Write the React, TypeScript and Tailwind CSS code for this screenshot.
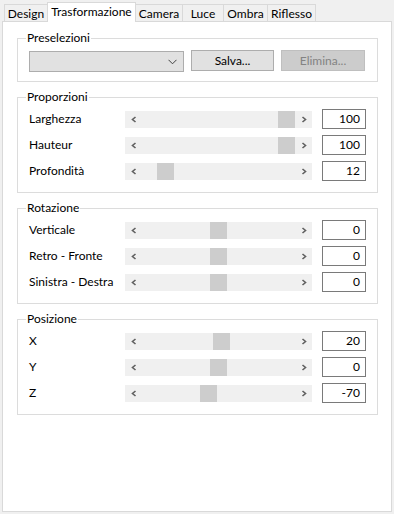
import React from 'react';

type SliderRow = { label: string; value: string; thumb: number };

const tabs = [
  { name: 'Design', w: 'w-[44px]' },
  { name: 'Trasformazione', w: 'w-[89px]', active: true },
  { name: 'Camera', w: 'w-[48px]' },
  { name: 'Luce', w: 'w-[42px]' },
  { name: 'Ombra', w: 'w-[45px]' },
  { name: 'Riflesso', w: 'w-[49px]' },
];

const groups: { title: string; rows: SliderRow[] }[] = [
  {
    title: 'Proporzioni',
    rows: [
      { label: 'Larghezza', value: '100', thumb: 136 },
      { label: 'Hauteur', value: '100', thumb: 136 },
      { label: 'Profondità', value: '12', thumb: 15 },
    ],
  },
  {
    title: 'Rotazione',
    rows: [
      { label: 'Verticale', value: '0', thumb: 68 },
      { label: 'Retro - Fronte', value: '0', thumb: 68 },
      { label: 'Sinistra - Destra', value: '0', thumb: 68 },
    ],
  },
  {
    title: 'Posizione',
    rows: [
      { label: 'X', value: '20', thumb: 71 },
      { label: 'Y', value: '0', thumb: 68 },
      { label: 'Z', value: '-70', thumb: 58 },
    ],
  },
];

const Chevron = ({ dir }: { dir: 'left' | 'right' }) => (
  <svg width="6" height="7" viewBox="0 0 6 7" className="shrink-0">
    <path
      d={dir === 'left' ? 'M4.5 1 L1.5 3.5 L4.5 6' : 'M1.5 1 L4.5 3.5 L1.5 6'}
      fill="none"
      stroke="#606060"
      strokeWidth="1.6"
    />
  </svg>
);

const ScrollBar = ({ thumb }: { thumb: number }) => (
  <div className="flex h-[17px] w-[187px] items-stretch bg-[#f0f0f0]">
    <div className="flex w-[17px] items-center justify-center">
      <Chevron dir="left" />
    </div>
    <div className="flex flex-1 items-stretch">
      <div className="w-[17px] bg-[#cdcdcd]" style={{ marginLeft: thumb }} />
    </div>
    <div className="flex w-[17px] items-center justify-center">
      <Chevron dir="right" />
    </div>
  </div>
);

const Group: React.FC<{ title: string; className?: string; children: React.ReactNode }> = ({
  title,
  className,
  children,
}) => (
  <fieldset className={`border border-[#dcdcdc] ${className ?? ''}`}>
    <legend className="ml-[8px] px-[1px] text-[12px] leading-[14px] text-[#000]">{title}</legend>
    <div className="px-[11px]">{children}</div>
  </fieldset>
);

export default function App() {
  return (
    <div
      className="flex h-[514px] w-[394px] flex-col bg-[#f0f0f0] px-[2px] pb-[2px] pt-[1px] text-[12px] text-black"
      style={{ fontFamily: 'Lato, "Liberation Sans", sans-serif' }}
    >
      <div className="relative z-10 flex h-[20px] items-end pl-[2px]">
        {tabs.map((t) =>
          t.active ? (
            <div
              key={t.name}
              className={`${t.w} -mb-px -ml-px flex h-[20px] items-start justify-center border border-b-0 border-[#d9d9d9] bg-white pt-[1px] leading-[15px]`}
            >
              {t.name}
            </div>
          ) : (
            <div
              key={t.name}
              className={`${t.w} -ml-px flex h-[17px] items-center justify-center border border-b-0 border-[#d9d9d9] bg-[#f0f0f0] leading-[15px] first:ml-0`}
            >
              {t.name}
            </div>
          )
        )}
      </div>

      <div className="flex-1 border border-[#d9d9d9] bg-white pl-[14px] pr-[13px] pt-[9px]">
        <Group title="Preselezioni">
          <div className="flex items-start pb-[9px] pt-[5px]">
            <div className="mt-px flex h-[21px] w-[155px] items-center justify-end border border-[#adadad] bg-[#e1e1e1] pr-[6px]">
              <svg width="9" height="6" viewBox="0 0 9 6">
                <path d="M0.5 0.8 L4.5 4.8 L8.5 0.8" fill="none" stroke="#404040" strokeWidth="1" />
              </svg>
            </div>
            <div className="ml-[7px] flex h-[21px] w-[83px] items-center justify-center border border-[#adadad] bg-[#e1e1e1]">
              Salva...
            </div>
            <div className="ml-[7px] flex h-[21px] w-[84px] items-center justify-center border border-[#bfbfbf] bg-[#cccccc] text-[#838383]">
              Elimina...
            </div>
          </div>
        </Group>

        {groups.map((g) => (
          <Group key={g.title} title={g.title} className="mt-[8px]">
            <div className="flex flex-col gap-[6px] pb-[11px] pt-[5px]">
              {g.rows.map((r) => (
                <div key={r.label} className="flex h-[20px] items-center">
                  <span className="w-[96px] whitespace-nowrap">{r.label}</span>
                  <ScrollBar thumb={r.thumb} />
                  <div className="ml-[10px] flex h-[20px] w-[44px] items-center justify-end border border-[#7a7a7a] bg-white pr-[5px]">
                    {r.value}
                  </div>
                </div>
              ))}
            </div>
          </Group>
        ))}
      </div>
    </div>
  );
}
